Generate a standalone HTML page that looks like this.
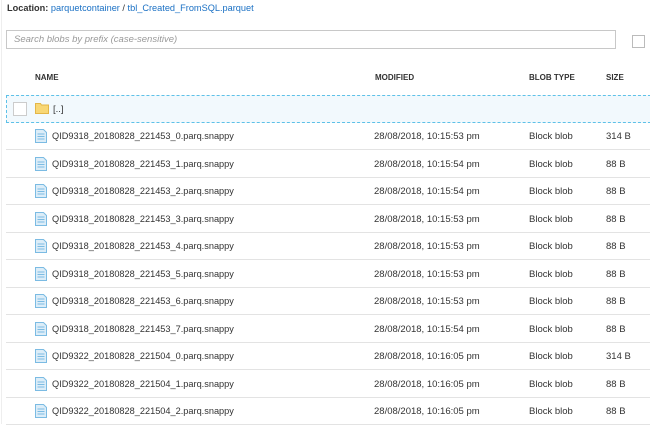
<!DOCTYPE html>
<html><head><style>
*{margin:0;padding:0;box-sizing:border-box}
body{width:650px;height:424px;overflow:hidden;background:#fff;font-family:"Liberation Sans",sans-serif;color:#333;position:relative}
.abs{position:absolute;white-space:nowrap}
.loc{left:7px;top:3px;font-size:9.2px;color:#333}
.loc b{font-weight:bold}
.loc a{color:#1a70c4;text-decoration:none}
.search{left:6px;top:30px;width:610px;height:19px;border:1px solid #c8c8c8;font-size:9.5px;font-style:italic;color:#999;padding:3px 0 0 7px}
.cb2{left:632px;top:35px;width:13px;height:13px;border:1px solid #bbb}
.hd{top:73px;font-size:8px;font-weight:bold;color:#333}
.folder{left:6px;top:95px;width:650px;height:28px;background:#f2f9fd;border:1px dashed #5ec1e8;border-right:none}
.row{left:6px;width:650px;height:28px;border-bottom:1px solid #e3e3e3}
.t{font-size:9.5px;color:#333;top:9px}
.fn{font-size:9.2px}
.leftline{left:1px;top:0;width:1px;height:424px;background:#eee}
</style></head><body>
<div class="abs leftline"></div>
<div class="abs loc"><b>Location:</b> <a>parquetcontainer</a> / <a>tbl_Created_FromSQL.parquet</a></div>
<div class="abs search">Search blobs by prefix (case-sensitive)</div>
<div class="abs cb2"></div>
<div class="abs hd" style="left:35px">NAME</div>
<div class="abs hd" style="left:375px">MODIFIED</div>
<div class="abs hd" style="left:529px">BLOB TYPE</div>
<div class="abs hd" style="left:606px">SIZE</div>
<div class="abs folder">
<div class="abs" style="left:6px;top:6px;width:14px;height:14px;border:1px solid #ccc;background:#fff"></div>
<svg class="abs" style="left:28px;top:6px" width="14" height="12" viewBox="0 0 14 12"><path d="M0.5 1.5h5l1 1.5h7v8.5h-13z" fill="#f8d775" stroke="#e3b648" stroke-width="1"/></svg>
<div class="abs t" style="left:46px;top:8px">[..]</div>
</div>
<div id="rows"></div>
<script>
var d=[["QID9318_20180828_221453_0.parq.snappy","28/08/2018, 10:15:53 pm","314 B"],
["QID9318_20180828_221453_1.parq.snappy","28/08/2018, 10:15:54 pm","88 B"],
["QID9318_20180828_221453_2.parq.snappy","28/08/2018, 10:15:54 pm","88 B"],
["QID9318_20180828_221453_3.parq.snappy","28/08/2018, 10:15:53 pm","88 B"],
["QID9318_20180828_221453_4.parq.snappy","28/08/2018, 10:15:53 pm","88 B"],
["QID9318_20180828_221453_5.parq.snappy","28/08/2018, 10:15:53 pm","88 B"],
["QID9318_20180828_221453_6.parq.snappy","28/08/2018, 10:15:53 pm","88 B"],
["QID9318_20180828_221453_7.parq.snappy","28/08/2018, 10:15:54 pm","88 B"],
["QID9322_20180828_221504_0.parq.snappy","28/08/2018, 10:16:05 pm","314 B"],
["QID9322_20180828_221504_1.parq.snappy","28/08/2018, 10:16:05 pm","88 B"],
["QID9322_20180828_221504_2.parq.snappy","28/08/2018, 10:16:05 pm","88 B"]];
var h="";
d.forEach(function(r,i){var top=122+i*27.5;
h+='<div class="abs row" style="top:'+top+'px">'+
'<svg class="abs" style="left:29px;top:7px" width="12" height="14" viewBox="0 0 12 14"><path d="M0.5 0.5h8l3 3v10h-11z" fill="#dcedf8" stroke="#7bbbe3"/><path d="M2.5 5h7M2.5 7.5h7M2.5 10h7" stroke="#7bbbe3"/></svg>'+
'<div class="abs t fn" style="left:46px">'+r[0]+'</div>'+
'<div class="abs t" style="left:368px">'+r[1]+'</div>'+
'<div class="abs t" style="left:523px">Block blob</div>'+
'<div class="abs t" style="left:600px">'+r[2]+'</div></div>';});
document.getElementById("rows").innerHTML=h;
</script>
</body></html>
